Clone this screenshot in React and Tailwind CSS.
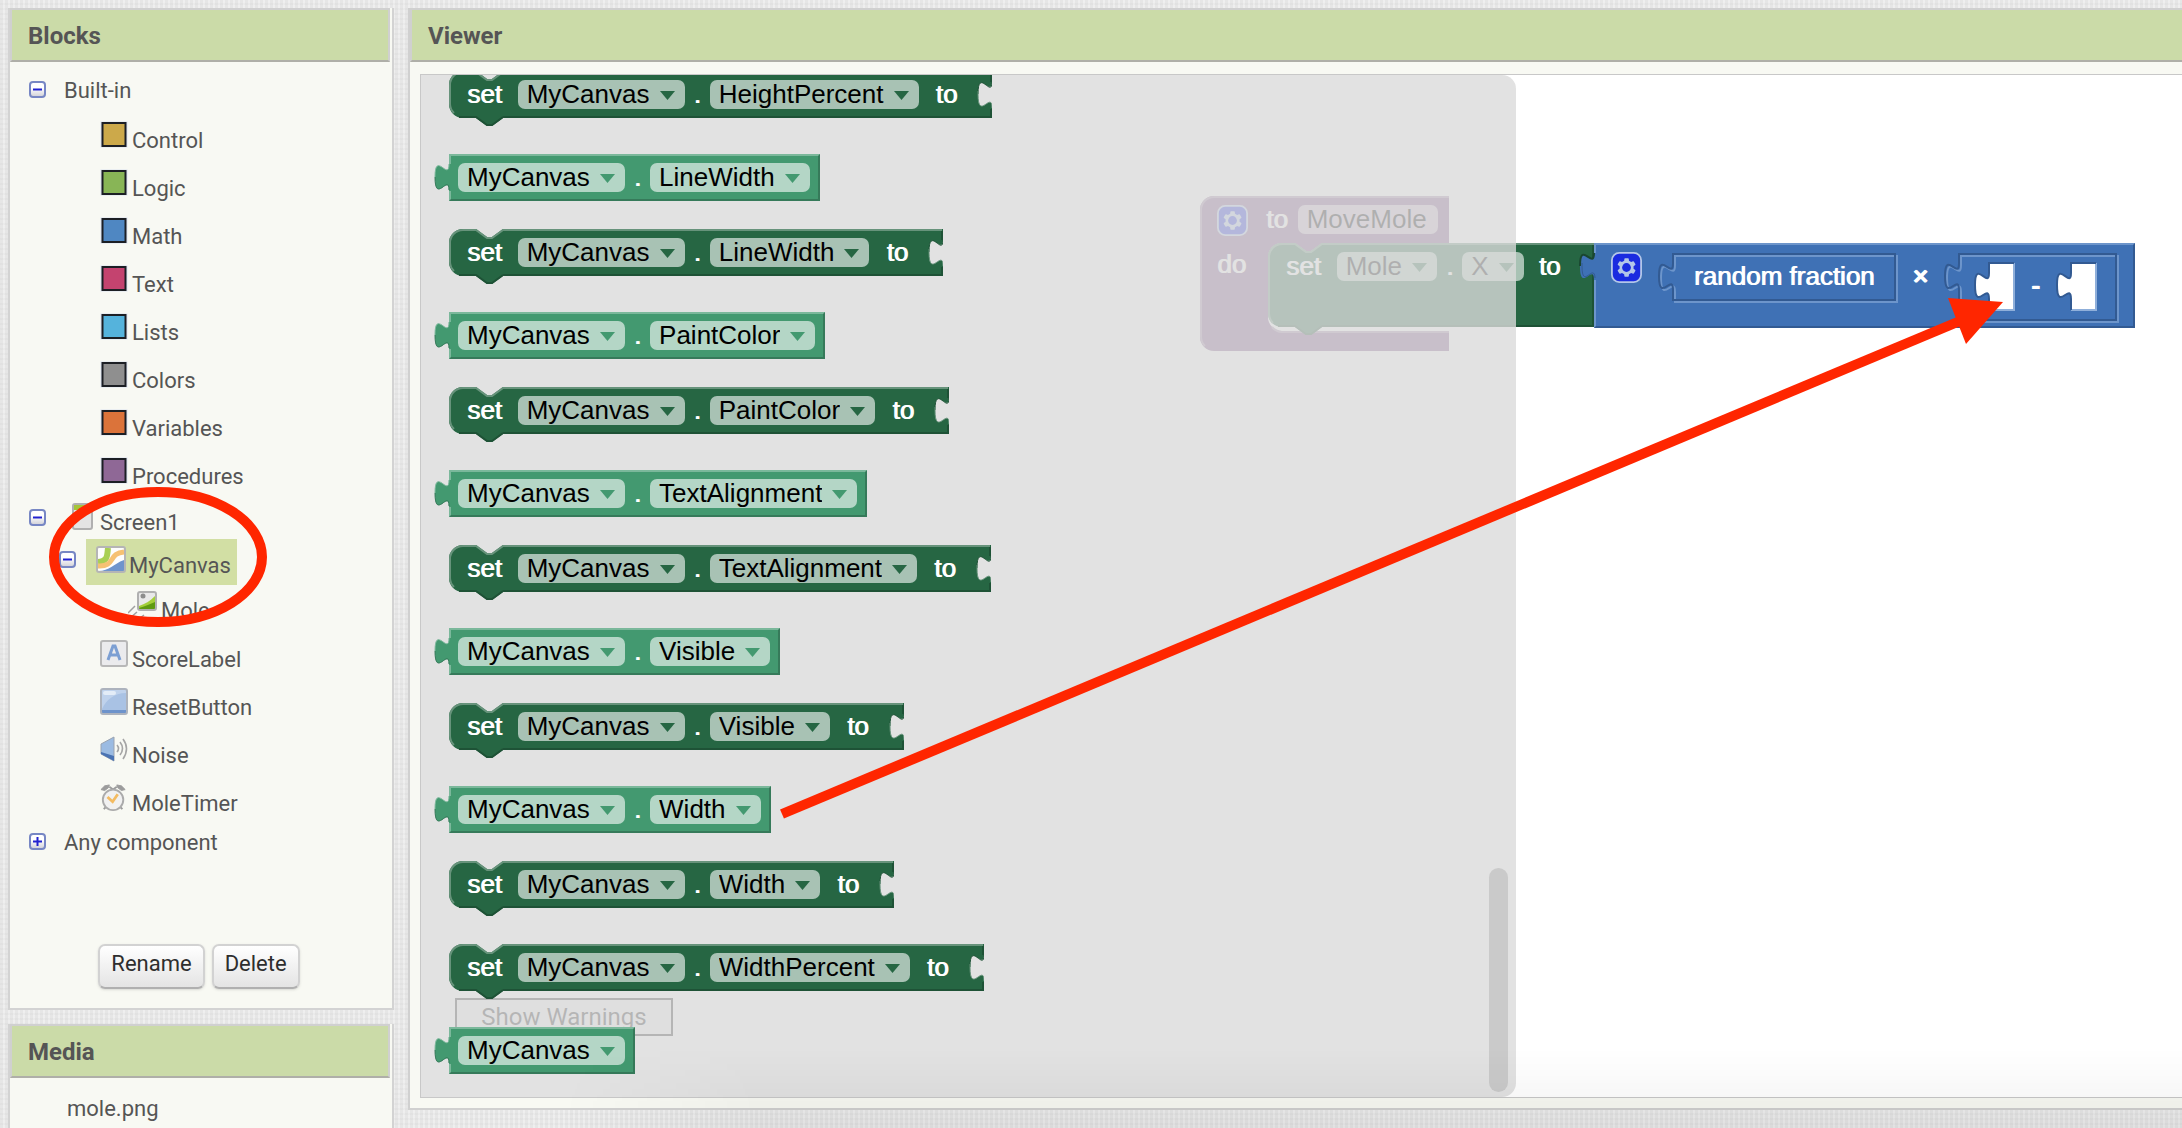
import React from "react";

const SETTER = {
  fill: "#266643",
  light: "#67937b",
  dark: "#1e5236",
  body: "bg-[#266643] border-t-[#67937b] border-b-[#1e5236]",
  field: "bg-[#a8c2b4]",
};
const GETTER = {
  fill: "#439970",
  light: "#7bb89b",
  dark: "#367a5a",
  body: "bg-[#439970] border-t-[#7bb89b] border-b-[#367a5a] border-r-[#367a5a] border-l-[#7bb89b]",
  field: "bg-[#b4d6c6]",
};

const blockText = "text-white [text-shadow:1px_0_0_#fff]";

const FLYOUT_BLOCKS = [
  { kind: "set", prop: "HeightPercent" },
  { kind: "get", prop: "LineWidth" },
  { kind: "set", prop: "LineWidth" },
  { kind: "get", prop: "PaintColor" },
  { kind: "set", prop: "PaintColor" },
  { kind: "get", prop: "TextAlignment" },
  { kind: "set", prop: "TextAlignment" },
  { kind: "get", prop: "Visible" },
  { kind: "set", prop: "Visible" },
  { kind: "get", prop: "Width" },
  { kind: "set", prop: "Width" },
  { kind: "set", prop: "WidthPercent" },
  { kind: "get", prop: null },
];

const BUILT_IN = [
  ["Control", "#cca94a"],
  ["Logic", "#88b556"],
  ["Math", "#4f87c2"],
  ["Text", "#c4436f"],
  ["Lists", "#55b3dc"],
  ["Colors", "#8f8f8f"],
  ["Variables", "#db733a"],
  ["Procedures", "#8f6896"],
];

function Field({ value, label, theme }) {
  return (
    <span className="relative flex shrink-0">
      <select
        aria-label={label}
        defaultValue={value}
        className={`h-[29px] appearance-none rounded-[7px] pr-[35px] pl-[9px] text-[26px] leading-[29px] text-black field-sizing-content ${theme.field}`}
      >
        <option>{value}</option>
      </select>
      <svg className="pointer-events-none absolute top-[11px] right-[10px]" width="15" height="9" viewBox="0 0 15 9">
        <path d="M0 0H15L7.5 9Z" fill={theme.fill} />
      </svg>
    </span>
  );
}

function SetBlock({ prop }) {
  const t = SETTER;
  return (
    <div className="relative mb-[36px] flex h-[47px] w-max text-[26px] leading-[29px]">
      <svg className="absolute top-0 left-0" width="54" height="56" viewBox="0 0 54 56" fill="none">
        <path d="M54 0L43 8H38L27 0H14A14 14 0 0 0 0 14V33A14 14 0 0 0 14 47H27L38 55H43L54 47Z" fill={t.fill} />
        <path d="M54 1L43 9H38L27 1H14A13 13 0 0 0 1 14V33A13 13 0 0 0 5 42" stroke={t.light} strokeWidth="2" />
        <path d="M10 46H27L38 54H43L54 46" stroke={t.dark} strokeWidth="2" />
      </svg>
      <div className={`absolute inset-y-0 right-[16px] left-[54px] border-t-2 border-b-2 ${t.body}`} />
      <svg className="absolute top-0 right-0" width="16" height="47" viewBox="0 0 16 47" fill="none">
        <path d="M0 0H16V10C16 28 2 -4 2 23C2 51 16 19 16 37V47H0Z" fill={t.fill} />
        <path d="M0 1H15" stroke={t.light} strokeWidth="2" />
        <path d="M0 46H15V38M15 2V11" stroke={t.dark} strokeWidth="2" />
        <path d="M16 11C16 28 2 -4 2 23" stroke={t.dark} />
        <path d="M2 20V23C2 51 16 19 16 37" stroke={t.light} />
      </svg>
      <div className="relative flex items-start pt-[9px] pr-[35px] pl-[18px]">
        <span className={`mr-[16px] ${blockText}`}>set</span>
        <Field value="MyCanvas" label="Component" theme={t} />
        <span className={`mx-[9px] ${blockText}`}>.</span>
        <Field value={prop} label="Property" theme={t} />
        <span className={`ml-[17px] ${blockText}`}>to</span>
      </div>
    </div>
  );
}

function GetBlock({ prop }) {
  const t = GETTER;
  return (
    <div className="relative mb-[28px] flex h-[47px] w-max text-[26px] leading-[29px]">
      <div className={`absolute inset-0 border-2 ${t.body}`} />
      <svg className="absolute top-0 right-full -mr-[3px]" width="18" height="47" viewBox="0 0 18 47" fill="none">
        <path d="M18 10H15C15 28 1 -4 1 23C1 51 15 19 15 37H18Z" fill={t.fill} />
        <path d="M15 10C15 28 1 -4 1 23" stroke={t.light} />
        <path d="M1 23C1 51 15 19 15 36" stroke={t.dark} />
      </svg>
      <div className="relative flex items-start pt-[9px] pr-[10px] pl-[9px]">
        <Field value="MyCanvas" label="Component" theme={t} />
        {prop && (
          <>
            <span className={`mx-[9px] ${blockText}`}>.</span>
            <Field value={prop} label="Property" theme={t} />
          </>
        )}
      </div>
    </div>
  );
}

function Gear() {
  return (
    <button type="button" aria-label="Edit block inputs" className="shrink-0">
      <svg width="31" height="31" viewBox="0 0 17 17">
        <rect x="0.5" y="0.5" width="16" height="16" rx="4" fill="#1a2be0" stroke="#b3c6e8" strokeWidth="1" />
        <g transform="translate(.5 .5)">
          <path
            d="m4.203,7.296 0,1.368 -0.92,0.677 -0.11,0.41 0.9,1.559 0.41,0.11 1.043,-0.457 1.187,0.683 0.127,1.134 0.3,0.3 1.8,0 0.3,-0.299 0.127,-1.138 1.185,-0.682 1.046,0.458 0.409,-0.11 0.9,-1.559 -0.11,-0.41 -0.92,-0.677 0,-1.366 0.92,-0.677 0.11,-0.41 -0.9,-1.559 -0.409,-0.109 -1.046,0.458 -1.185,-0.682 -0.127,-1.138 -0.3,-0.299 -1.8,0 -0.3,0.3 -0.126,1.135 -1.187,0.682 -1.043,-0.457 -0.41,0.11 -0.899,1.559 0.108,0.409z"
            fill="#b3c6e8"
          />
          <circle cx="8" cy="8" r="2.4" fill="#1a2be0" />
        </g>
      </svg>
    </button>
  );
}

function InsetOutline({ w, h }) {
  const d = `M16 1H${w + 14}V${h}H16V37C16 19 2 51 2 23C2 -4 16 28 16 10Z`;
  return (
    <svg className="absolute top-0 -left-[15px]" width={w + 18} height={h + 4} fill="none" strokeWidth="2">
      <path d={d} stroke="#6d95cb" transform="translate(2 2)" />
      <path d={d} stroke="#325a92" />
    </svg>
  );
}

function Socket() {
  return (
    <svg width="41" height="49" viewBox="0 0 41 49" fill="none">
      <path d="M15 1H40V48H15V37C15 19 1 51 1 23C1 -4 15 28 15 11Z" fill="#fff" />
      <path d="M40 1V48H15" stroke="#8fafda" strokeWidth="2" />
      <path d="M15 48V37C15 19 1 51 1 23C1 -4 15 28 15 11V1H40" stroke="#325a92" strokeWidth="2" />
    </svg>
  );
}

function ProcedureStack() {
  return (
    <div className="absolute top-[121px] left-[779px] text-[26px] leading-[29px]">
      <svg className="absolute top-0 left-0" width="249" height="155" fill="none">
        <path
          d="M14 0H249V47H122L111 55H106L95 47H82A14 14 0 0 0 68 61V121A14 14 0 0 0 82 135H249V155H14A14 14 0 0 1 0 141V14A14 14 0 0 1 14 0Z"
          fill="#7c5385"
        />
        <path d="M249 1H14A13 13 0 0 0 1 14V141A13 13 0 0 0 5 150M72 131A14 14 0 0 0 82 136H249" stroke="#a387a9" strokeWidth="2" />
      </svg>
      <div className="relative flex items-start pt-[9px] pl-[17px]">
        <Gear />
        <span className={`ml-[18px] ${blockText}`}>to</span>
        <input
          aria-label="Procedure name"
          defaultValue="MoveMole"
          className="ml-[10px] h-[29px] w-[140px] rounded-[7px] bg-[#cbbace] px-[9px] text-[26px] leading-[29px] text-black"
        />
      </div>
      <span className={`absolute top-[54px] left-[17px] ${blockText}`}>do</span>
      <div className="absolute top-[47px] left-[68px] flex h-[84px] items-start">
        <svg className="absolute top-0 left-0" width="326" height="93" fill="none">
          <path d="M326 0H54L43 8H38L27 0H14A14 14 0 0 0 0 14V70A14 14 0 0 0 14 84H27L38 92H43L54 84H326Z" fill="#266643" />
          <path d="M326 1H54L43 9H38L27 1H14A13 13 0 0 0 1 14V70A13 13 0 0 0 5 80" stroke="#67937b" strokeWidth="2" />
          <path d="M10 83H27L38 91H43L54 83H325V2" stroke="#1e5236" strokeWidth="2" />
        </svg>
        <div className="relative flex w-[326px] items-start pt-[9px] pl-[18px]">
          <span className={`mr-[16px] ${blockText}`}>set</span>
          <Field value="Mole" label="Component" theme={SETTER} />
          <span className={`mx-[9px] ${blockText}`}>.</span>
          <Field value="X" label="Property" theme={SETTER} />
          <span className={`ml-[15px] ${blockText}`}>to</span>
        </div>
        <div className="relative h-[85px] w-[541px] border-2 border-t-[#6d95cb] border-r-[#325a92] border-b-[#325a92] border-l-[#6d95cb] bg-[#3f71b5]">
          <svg className="absolute top-0 -left-[17px]" width="18" height="47" fill="none">
            <path d="M18 8H15C15 26 1 -6 1 21C1 49 15 17 15 35H18Z" fill="#3f71b5" />
            <path d="M15 8C15 26 1 -6 1 21" stroke="#1a4630" strokeWidth="2" />
            <path d="M3 18V21C3 46 15 17 16 33" stroke="#325a92" />
          </svg>
          <div className="flex items-start pt-[7px] pl-[15px]">
            <Gear />
            <div className="relative mt-px ml-[30px] h-[47px] w-[224px]">
              <InsetOutline w={224} h={47} />
              <span className={`relative block pt-[9px] text-center ${blockText}`}>random fraction</span>
            </div>
            <span className={`mt-[10px] ml-[16px] w-[16px] text-center font-bold ${blockText}`}>×</span>
            <div className="relative mt-px ml-[30px] flex h-[67px] w-[159px] items-start pt-[9px] pl-[16px]">
              <InsetOutline w={159} h={67} />
              <Socket />
              <span className={`relative mx-[16px] mt-[9px] font-bold ${blockText}`}>-</span>
              <Socket />
            </div>
          </div>
        </div>
      </div>
    </div>
  );
}

function Toggle({ open = true, label }) {
  return (
    <button type="button" aria-label={label} aria-expanded={open} className="shrink-0">
      <svg width="17" height="17" viewBox="0 0 17 17">
        <defs>
          <linearGradient id="toggleFace" x1="0" y1="0" x2="0" y2="1">
            <stop offset="0.4" stopColor="#ffffff" />
            <stop offset="1" stopColor="#cfcfd6" />
          </linearGradient>
        </defs>
        <rect x="1" y="1" width="15" height="15" rx="3" fill="url(#toggleFace)" stroke="#7787c4" strokeWidth="2" />
        <path d={open ? "M4 8.5H13" : "M4 8.5H13M8.5 4V13"} stroke="#2222d0" strokeWidth="2" />
      </svg>
    </button>
  );
}

function Swatch({ color }) {
  return (
    <svg className="shrink-0" width="28" height="27" viewBox="0 0 28 27">
      <rect x="0.5" y="0.5" width="27" height="26" fill="#dbe3f0" />
      <rect x="2.5" y="2" width="23" height="23" fill={color} stroke="#1c1f24" strokeWidth="2" />
    </svg>
  );
}

function ScreenIcon() {
  return (
    <svg className="shrink-0" width="28" height="27" viewBox="0 0 28 27">
      <rect x="5" y="1" width="19" height="25" rx="2" fill="#e4e4e4" stroke="#b0b0b0" strokeWidth="2" />
      <path d="M6 2H23V7H6Z" fill="#a4c639" />
    </svg>
  );
}

function CanvasIcon() {
  return (
    <svg className="shrink-0" width="30" height="27" viewBox="0 0 30 27" fill="none">
      <rect x="1" y="1" width="28" height="25" rx="2" fill="#fdfdfd" />
      <path d="M2 16C12 15 11 10 12 2" stroke="#a9cf54" strokeWidth="6" />
      <path d="M2 20C20 21 12 7 28 6" stroke="#f6c173" strokeWidth="5" />
      <path d="M2 25C14 25 17 18 28 14V25Z" fill="#6f94cc" />
      <rect x="1" y="1" width="28" height="25" rx="2" stroke="#b5b5b5" strokeWidth="2" />
    </svg>
  );
}

function SpriteIcon() {
  return (
    <svg className="shrink-0" width="29" height="27" viewBox="0 0 29 27" fill="none">
      <rect x="10" y="1" width="18" height="18" rx="2" fill="#e9e9e9" />
      <path d="M11 15C17 13 22 10 27 5V19H11Z" fill="#a4cf3a" />
      <path d="M11 17C18 15 22 13 27 11V19H11Z" fill="#5f9a10" />
      <circle cx="15" cy="5" r="2.5" fill="#8d8d8d" />
      <rect x="10" y="1" width="18" height="18" rx="2" stroke="#b0b0b0" strokeWidth="2" />
      <path d="M7 15L0 22M9 21L2 27M16 24L12 27" stroke="#a0a0a0" strokeWidth="1.5" />
    </svg>
  );
}

function LabelIcon() {
  return (
    <svg className="shrink-0" width="28" height="27" viewBox="0 0 28 27" fill="none">
      <rect x="1" y="1" width="26" height="25" rx="2" fill="#ebebed" stroke="#b8b8b8" strokeWidth="2" />
      <path d="M8 20L13 6H15L20 20M10 15H18" stroke="#7c9fd3" strokeWidth="3" />
    </svg>
  );
}

function ButtonIcon() {
  return (
    <svg className="shrink-0" width="28" height="27" viewBox="0 0 28 27" fill="none">
      <rect x="1" y="1" width="26" height="25" rx="2" fill="#a9c2e4" />
      <path d="M2 2H26V5C14 5 6 12 2 21Z" fill="#bfd2ec" />
      <rect x="3" y="3" width="13" height="4" rx="2" fill="#e3ecf7" />
      <path d="M2 22H26V25H2Z" fill="#6d93cb" />
      <rect x="1" y="1" width="26" height="25" rx="2" stroke="#adb3bd" strokeWidth="2" />
    </svg>
  );
}

function SoundIcon() {
  return (
    <svg className="shrink-0" width="28" height="27" viewBox="0 0 28 27" fill="none">
      <path d="M1 8L14 1V25L1 18Z" fill="#9bbbe2" stroke="#9aa3b0" />
      <path d="M1 16L14 20V25L1 18Z" fill="#4a73b3" />
      <path d="M17 9Q20 12.5 17 16M20 6Q25 12.5 20 19M23 3Q30 12.5 23 23" stroke="#a5a5a5" strokeWidth="1.6" />
    </svg>
  );
}

function ClockIcon() {
  return (
    <svg className="shrink-0" width="28" height="27" viewBox="0 0 28 29" fill="none">
      <path d="M0 6L4 2L9 1L8 4L4 7ZM26 6L22 2L17 1L18 4L22 7Z" fill="#9c9c9c" stroke="#9c9c9c" />
      <path d="M9 3L13 6L17 3M5 25L3 27M21 25L23 27" stroke="#9c9c9c" strokeWidth="2" />
      <circle cx="13" cy="17" r="11" fill="#f1f1f1" stroke="#ababab" strokeWidth="2" />
      <path d="M7 14L12.5 19L18 11" stroke="#f3bb62" strokeWidth="3" />
    </svg>
  );
}

function PanelHeader({ children, open }) {
  return (
    <h2
      className={`h-[54px] border-2 border-[#d0d0d0] border-b-[#afafa8] bg-[#cbdba8] pl-4 text-[24px] leading-[52px] font-bold text-[#555] ${open ? "border-r-0" : "mr-[2px]"}`}
    >
      {children}
    </h2>
  );
}

function Leaf({ icon, children }) {
  return (
    <li className="flex h-12 items-baseline gap-1 pt-[5px] pl-[90px]">
      {icon}
      <span>{children}</span>
    </li>
  );
}

function ToolButton({ children }) {
  return (
    <button
      type="button"
      className="h-[45px] rounded-[7px] border-2 border-[#d2d2d2] border-b-[#b0b0b0] bg-linear-to-b from-white to-[#e4e4e4] px-[11px] pb-[5px] text-[#2e2e2e] shadow-sm"
    >
      {children}
    </button>
  );
}

export default function App() {
  return (
    <div className="relative flex h-screen gap-[14px] overflow-hidden bg-[#e6e6e6] bg-[repeating-linear-gradient(0deg,transparent_0_3px,rgba(0,0,0,0.02)_3px_5px),repeating-linear-gradient(90deg,transparent_0_3px,rgba(255,255,255,0.35)_3px_5px)] pt-2 pl-2 font-['Roboto',sans-serif] text-[#555]">
      <aside className="flex w-[386px] shrink-0 flex-col gap-[14px] text-[22px] leading-7">
        <section className="border-2 border-t-0 border-[#d3d3d3] bg-[#f8f9f3] pb-[19px]">
          <PanelHeader>Blocks</PanelHeader>
          <ul className="pt-1">
            <li className="flex h-[50px] items-baseline gap-[18px] pt-[11px] pl-[19px]">
              <Toggle label="Built-in" />
              <span>Built-in</span>
            </li>
            {BUILT_IN.map(([name, color]) => (
              <Leaf key={name} icon={<Swatch color={color} />}>
                {name}
              </Leaf>
            ))}
            <li className="flex h-[39px] items-baseline pt-[3px] pl-[19px]">
              <span className="mr-[22px] flex self-start pt-[6px]">
                <Toggle label="Screen1" />
              </span>
              <span className="flex items-baseline gap-1">
                <ScreenIcon />
                <span>Screen1</span>
              </span>
            </li>
            <li className="flex h-[46px] items-stretch pl-[49px]">
              <span className="mr-[10px] flex items-start pt-[12px]">
                <Toggle label="MyCanvas" />
              </span>
              <span className="flex items-baseline gap-[3px] bg-[#d2dfa4] pt-[7px] pr-[6px] pl-[10px]">
                <CanvasIcon />
                <span>MyCanvas</span>
              </span>
            </li>
            <li className="flex h-[50px] items-baseline gap-1 pt-[6px] pl-[118px]">
              <SpriteIcon />
              <span>Mole</span>
            </li>
            <Leaf icon={<LabelIcon />}>ScoreLabel</Leaf>
            <Leaf icon={<ButtonIcon />}>ResetButton</Leaf>
            <Leaf icon={<SoundIcon />}>Noise</Leaf>
            <Leaf icon={<ClockIcon />}>MoleTimer</Leaf>
            <li className="flex h-12 items-baseline gap-[18px] pt-[2px] pl-[19px]">
              <Toggle open={false} label="Any component" />
              <span>Any component</span>
            </li>
          </ul>
          <div className="mt-[69px] flex justify-center gap-[7px] pr-1">
            <ToolButton>Rename</ToolButton>
            <ToolButton>Delete</ToolButton>
          </div>
        </section>
        <section className="flex-1 border-2 border-t-0 border-b-0 border-[#d3d3d3] bg-[#f8f9f3]">
          <PanelHeader>Media</PanelHeader>
          <p className="pt-[17px] pl-[57px]">mole.png</p>
        </section>
      </aside>

      <main className="mb-[18px] flex min-w-0 flex-1 flex-col border-b-2 border-l-2 border-[#d0d0d0] bg-[#f8f9f3]">
        <PanelHeader open>Viewer</PanelHeader>
        <div className="flex min-h-0 flex-1 pt-3 pb-[10px] pl-[10px]">
          <div className="relative flex-1 overflow-hidden border border-r-0 border-[#c8c8c8] bg-white font-['Liberation_Sans',Arial,sans-serif]">
            <ProcedureStack />
            <button
              type="button"
              className="absolute bottom-[61px] left-[34px] h-[38px] w-[218px] border-2 border-[#222] bg-[#efefef] font-['Roboto',sans-serif] text-[24px] leading-[34px] text-[#222]"
            >
              Show Warnings
            </button>
            <div className="absolute inset-y-0 left-0 w-[1095px] overflow-hidden rounded-r-[14px] bg-[#dbdbdb]/80">
              <div className="-mt-1 flex flex-col pl-[28px]">
                {FLYOUT_BLOCKS.map((b, i) =>
                  b.kind === "set" ? <SetBlock key={i} prop={b.prop} /> : <GetBlock key={i} prop={b.prop} />
                )}
              </div>
              <div className="absolute right-2 bottom-[5px] h-[224px] w-[19px] rounded-full bg-[#cacaca]" />
            </div>
          </div>
        </div>
      </main>

      <div className="pointer-events-none absolute right-0 bottom-0 left-[560px] h-[80px] bg-linear-to-b from-transparent to-black/5 [mask-image:linear-gradient(90deg,transparent,#000_200px)]" />
      <svg className="pointer-events-none absolute top-0 left-0" width="2182" height="1128" fill="none">
        <ellipse cx="158" cy="557" rx="104" ry="65" stroke="#ff2600" strokeWidth="10" />
        <path d="M782 814L1960 321" stroke="#ff2600" strokeWidth="10" />
        <path d="M1948 298L2003 302L1966 344Z" fill="#ff2600" />
      </svg>
    </div>
  );
}
